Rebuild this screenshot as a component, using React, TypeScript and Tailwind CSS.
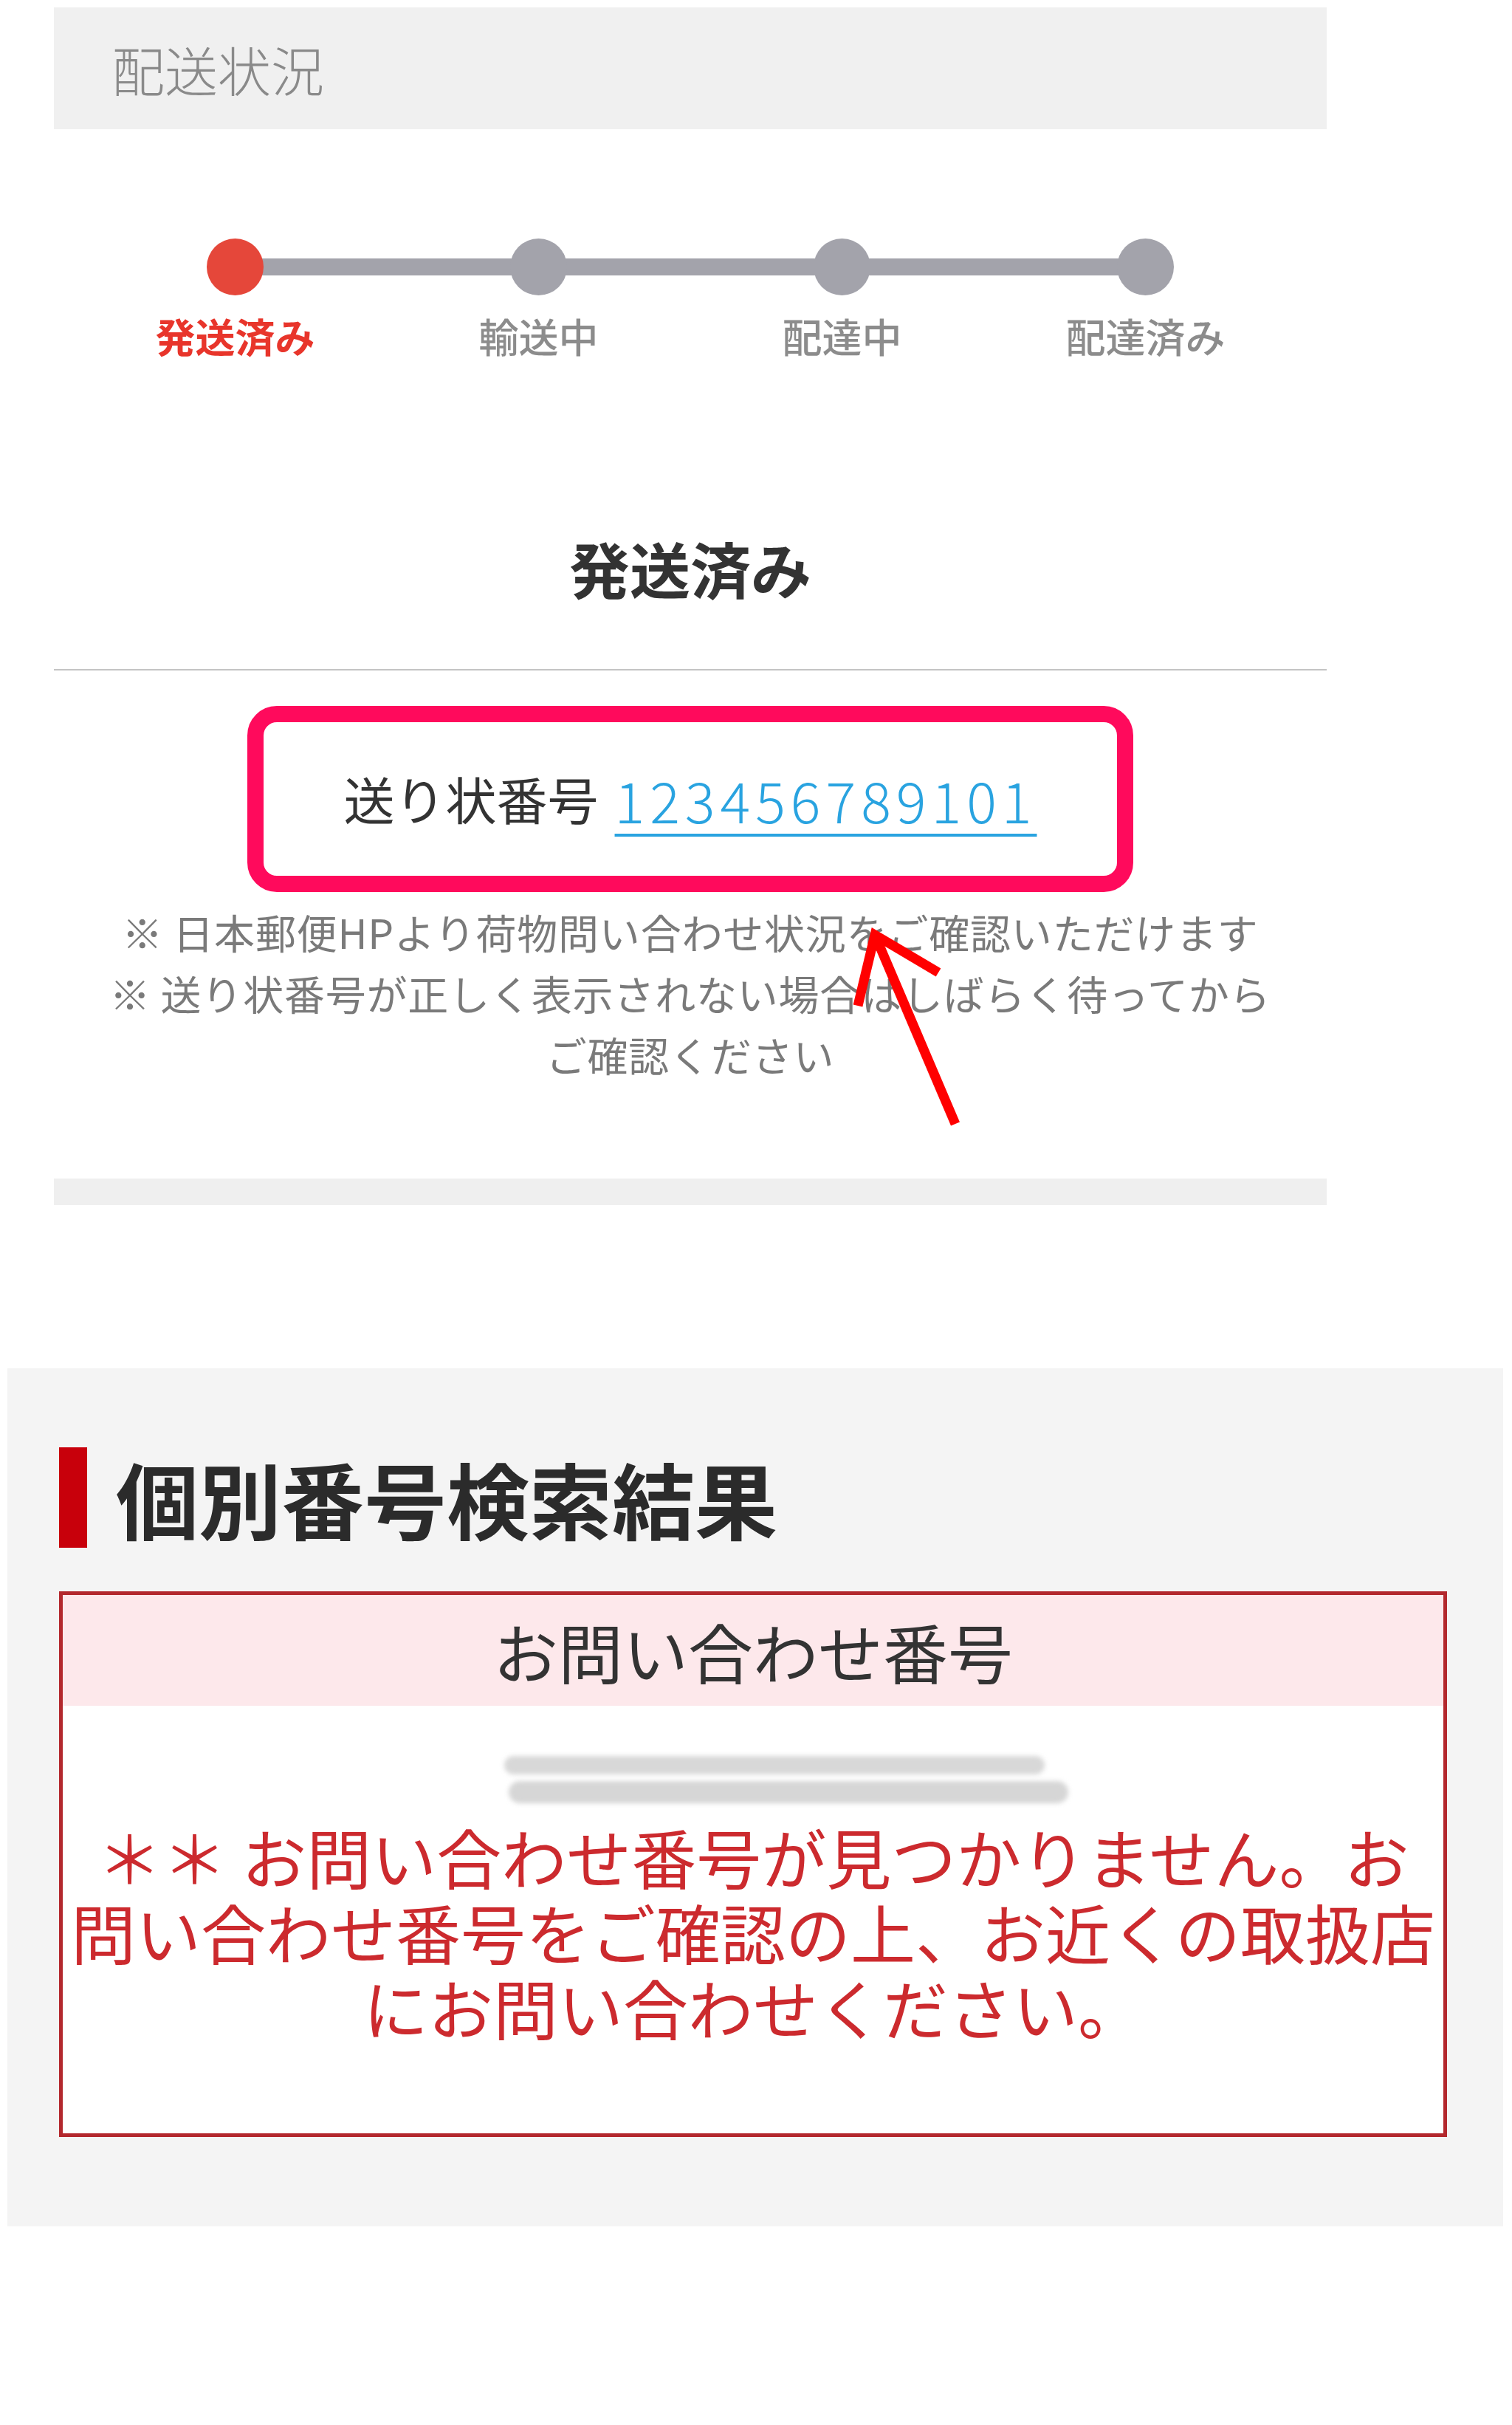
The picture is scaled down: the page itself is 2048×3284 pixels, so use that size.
const steps = [
  { label: "発送済み", active: true },
  { label: "輸送中", active: false },
  { label: "配達中", active: false },
  { label: "配達済み", active: false },
];

const StepBar = () => (
  <div className="relative mt-[148px] px-[40px]">
    <div className="absolute left-[245px] right-[245px] top-[27px] h-[23px] bg-[#a3a3ab]" />
    <div className="relative grid grid-cols-4">
      {steps.map((s) => (
        <div key={s.label} className="flex flex-col items-center">
          <div
            className={
              s.active
                ? "h-[77px] w-[77px] rounded-full bg-[#e5473a]"
                : "h-[77px] w-[77px] rounded-full bg-[#a3a3ab]"
            }
          />
          <div
            className={
              s.active
                ? "mt-[23px] text-[54px] leading-[64px] font-bold text-[#e8352b]"
                : "mt-[23px] text-[54px] leading-[64px] font-medium text-[#8c8c8c]"
            }
          >
            {s.label}
          </div>
        </div>
      ))}
    </div>
  </div>
);

const Arrow = () => (
  <svg
    className="absolute left-[1140px] top-[1240px]"
    width="180"
    height="300"
    viewBox="0 0 180 300"
    fill="none"
  >
    <path d="M45 26 L154 282" stroke="#ff0000" strokeWidth="13" />
    <path d="M131 77 L45 26 L22 122" stroke="#ff0000" strokeWidth="13" strokeLinejoin="miter" />
  </svg>
);

export default function App() {
  return (
    <div className="relative min-h-[3284px] w-[2048px] bg-white pt-[10px] font-['Noto_Sans_CJK_JP','Noto_Sans',sans-serif]">
      {/* 配送状況 */}
      <div className="ml-[73px] w-[1724px]">
        <div className="flex h-[165px] items-center bg-[#f0f0f0] pl-[78px] text-[72px] font-light text-[#8a8a8a]">
          配送状況
        </div>

        <StepBar />

        <h2 className="mt-[232px] text-center text-[82px] leading-[100px] font-bold text-[#333333]">
          発送済み
        </h2>

        <div className="mt-[87px] h-[2px] bg-[#c4c4c4]" />

        <div className="mx-auto mt-[48px] flex h-[252px] w-[1200px] items-center justify-center rounded-[40px] border-[22px] border-[#ff0a5c]">
          <span className="text-[69px] text-[#333333]">送り状番号</span>
          <span className="ml-[22px] text-[76px] font-light tracking-[7px] text-[#29a3e0] underline decoration-[#29a3e0] decoration-4 underline-offset-[14px]">
            123456789101
          </span>
        </div>

        <div className="mt-[12px] text-center text-[55px] leading-[83px] tracking-[0.8px] text-[#7a7a7a]">
          <p>※ 日本郵便HPより荷物問い合わせ状況をご確認いただけます</p>
          <p>
            ※ 送り状番号が正しく表示されない場合はしばらく待ってから
            <br />
            ご確認ください
          </p>
        </div>

        <div className="mt-[127px] h-[36px] bg-[#efefef]" />
      </div>

      {/* 個別番号検索結果 */}
      <div className="ml-[10px] mt-[221px] h-[1162px] w-[2026px] bg-[#f4f4f4] pl-[70px] pt-[107px]">
        <div className="flex items-center">
          <div className="h-[136px] w-[38px] bg-[#c8000b]" />
          <h1 className="ml-[39px] text-[112px] leading-[136px] font-bold text-[#2b2b2b]">
            個別番号検索結果
          </h1>
        </div>

        <div className="mt-[59px] w-[1880px] border-[5px] border-[#b3282d] bg-white">
          <div className="flex h-[150px] items-center justify-center bg-[#fde8eb] text-[88px] text-[#333333]">
            お問い合わせ番号
          </div>
          <div className="pb-[121px] pt-[68px]">
            <div className="ml-[598px] h-[25px] w-[732px] rounded-full bg-[#d8d8d8] blur-[3px]" />
            <div className="ml-[604px] mt-[9px] h-[30px] w-[758px] rounded-full bg-[#d6d6d6] blur-[3px]" />
            <p className="mt-[20px] text-center text-[88px] leading-[102px] text-[#cc2a2e]">
              ＊＊ お問い合わせ番号が見つかりません。お
              <br />
              問い合わせ番号をご確認の上、お近くの取扱店
              <br />
              にお問い合わせください。
            </p>
          </div>
        </div>
      </div>

      <Arrow />
    </div>
  );
}
